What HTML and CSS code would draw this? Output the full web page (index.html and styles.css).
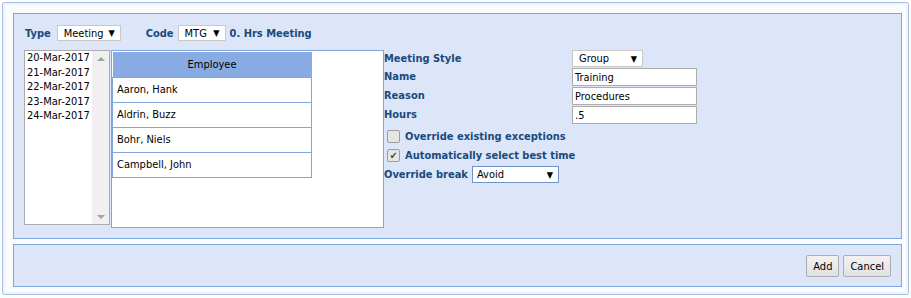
FILE: index.html
```html
<!DOCTYPE html>
<html lang="en">

<head>
  <meta charset="UTF-8">
  <title>Add Meeting</title>
  <link rel="stylesheet" href="styles.css">
</head>

<body>
  <div class="dialog">
    <!-- 1.main panel -->
    <div class="panel main">
      <div class="toprow">
        <span class="lbl">Type</span>
        <div class="sel sel-type"><span>Meeting</span><i>&#9660;</i></div>
        <span class="lbl lbl-code">Code</span>
        <div class="sel sel-code"><span>MTG</span><i>&#9660;</i></div>
        <span class="lbl lbl-hrs">0. Hrs Meeting</span>
      </div>

      <div class="body">
        <!-- dates -->
        <div class="listbox">
          <ul>
            <li>20-Mar-2017</li>
            <li>21-Mar-2017</li>
            <li>22-Mar-2017</li>
            <li>23-Mar-2017</li>
            <li>24-Mar-2017</li>
          </ul>
          <div class="scroll">
            <b class="up"></b>
            <b class="down"></b>
          </div>
        </div>

        <!-- employees -->
        <div class="emps">
          <table>
            <tr><th>Employee</th></tr>
            <tr><td>Aaron, Hank</td></tr>
            <tr><td>Aldrin, Buzz</td></tr>
            <tr><td>Bohr, Niels</td></tr>
            <tr><td>Campbell, John</td></tr>
          </table>
        </div>

        <!-- form -->
        <div class="form">
          <div class="frow r1">
            <span class="lbl">Meeting Style</span>
            <div class="sel sel-style"><span>Group</span><i>&#9660;</i></div>
          </div>
          <div class="frow">
            <span class="lbl">Name</span>
            <div class="inp">Training</div>
          </div>
          <div class="frow">
            <span class="lbl">Reason</span>
            <div class="inp">Procedures</div>
          </div>
          <div class="frow">
            <span class="lbl">Hours</span>
            <div class="inp">.5</div>
          </div>
          <div class="chk first">
            <span class="box"></span>
            <span class="lbl">Override existing exceptions</span>
          </div>
          <div class="chk">
            <span class="box on">&#10004;</span>
            <span class="lbl">Automatically select best time</span>
          </div>
          <div class="brk">
            <span class="lbl">Override break</span>
            <div class="sel sel-brk"><span>Avoid</span><i>&#9660;</i></div>
          </div>
        </div>
      </div>
    </div>

    <!-- 2.buttons -->
    <div class="panel foot">
      <button>Add</button>
      <button>Cancel</button>
    </div>
  </div>
</body>

</html>
```

FILE: styles.css
```css
* {
  margin: 0;
  padding: 0;
  box-sizing: border-box;
}

body {
  background-color: #fff;
  font-family: "DejaVu Sans Condensed", "Liberation Sans", sans-serif;
  font-size: 11px;
  color: #000;
}

.dialog {
  margin: 2px;
  width: 907px;
  height: 293px;
  padding: 10px 6px 7px 10px;
  border: 1px solid #a6c0e6;
  border-radius: 2px;
  background-color: #fbfcfe;
  box-shadow: inset 0 0 0 2px #eef3fb;
}

.panel {
  width: 889px;
  border: 1px solid #7fa7dc;
  background-color: #dce6f8;
}

.main {
  height: 226px;
  padding: 11px 10px 0 10px;
}

.lbl {
  font-weight: bold;
  color: #1a4a7c;
  white-space: nowrap;
}

/* top row */
.toprow {
  display: flex;
  align-items: center;
  height: 16px;
  padding-left: 1px;
}

.sel {
  display: flex;
  align-items: center;
  justify-content: space-between;
  height: 16px;
  padding: 0 5px 0 6px;
  border: 1px solid #c8c8c8;
  background-color: #fff;
}

.sel i {
  font-style: normal;
  font-size: 9px;
}

.sel-type {
  width: 64px;
  margin-left: 6px;
}

.lbl-code {
  margin-left: 25px;
}

.sel-code {
  width: 48px;
  margin-left: 4px;
}

.lbl-hrs {
  margin-left: 4px;
}

/* body */
.body {
  display: flex;
  margin-top: 9px;
}

.listbox {
  display: flex;
  width: 86px;
  height: 175px;
  border: 1px solid #ababab;
  background-color: #fff;
}

.listbox ul {
  flex: 1;
  list-style: none;
  padding: 0 0 0 2px;
  line-height: 14.5px;
}

.scroll {
  display: flex;
  flex-direction: column;
  justify-content: space-between;
  align-items: center;
  width: 17px;
  padding: 6px 0 5px;
  background-color: #f0f0f0;
}

.scroll b {
  width: 0;
  height: 0;
  border-left: 4px solid transparent;
  border-right: 4px solid transparent;
}

.scroll .up {
  border-bottom: 4px solid #a3a3a3;
}

.scroll .down {
  border-top: 4px solid #a3a3a3;
}

.emps {
  width: 273px;
  height: 178px;
  margin-left: 1px;
  padding-top: 1px;
  border: 1px solid #7fa7dc;
  background-color: #fff;
}

.emps table {
  width: 200px;
  border-collapse: collapse;
}

.emps th {
  height: 25px;
  font-weight: normal;
  background-color: #89abe3;
  border-bottom: 1px solid #7fa7dc;
}

.emps td {
  height: 25px;
  padding-left: 4px;
  border: 1px solid #7fa7dc;
  border-top: 0;
}

/* form */
.form {
  width: 320px;
}

.frow {
  display: flex;
  align-items: center;
  height: 19px;
}

.frow .lbl {
  width: 188px;
}

.frow.r1 {
  height: 17px;
}

.sel-style {
  width: 71px;
  height: 17px;
}

.inp {
  width: 125px;
  height: 18px;
  padding: 2px 2px 0;
  border: 1px solid #acacac;
  background-color: #fff;
}

.chk {
  display: flex;
  align-items: center;
  gap: 5px;
  height: 19px;
  padding-left: 3px;
}

.chk.first {
  margin-top: 3px;
}

.box {
  width: 13px;
  height: 13px;
  border: 1px solid #9d9d9d;
  border-radius: 2px;
  background-color: #e5e5e5;
  font-size: 10px;
  line-height: 11px;
  text-align: center;
  color: #444;
}

.brk {
  display: flex;
  align-items: center;
  height: 17px;
  margin-top: 1px;
}

.sel-brk {
  width: 87px;
  height: 17px;
  margin-left: 4px;
  padding-left: 4px;
  border-color: #6d93c8;
}

/* footer */
.foot {
  display: flex;
  justify-content: flex-end;
  gap: 4px;
  height: 43px;
  margin-top: 5px;
  padding: 10px 10px 0 0;
}

button {
  height: 22px;
  padding: 0 6px;
  font-family: inherit;
  font-size: 11px;
  border: 1px solid #adadad;
  border-radius: 2px;
  background: linear-gradient(#f2f2f2, #e2e2e2);
}
```
